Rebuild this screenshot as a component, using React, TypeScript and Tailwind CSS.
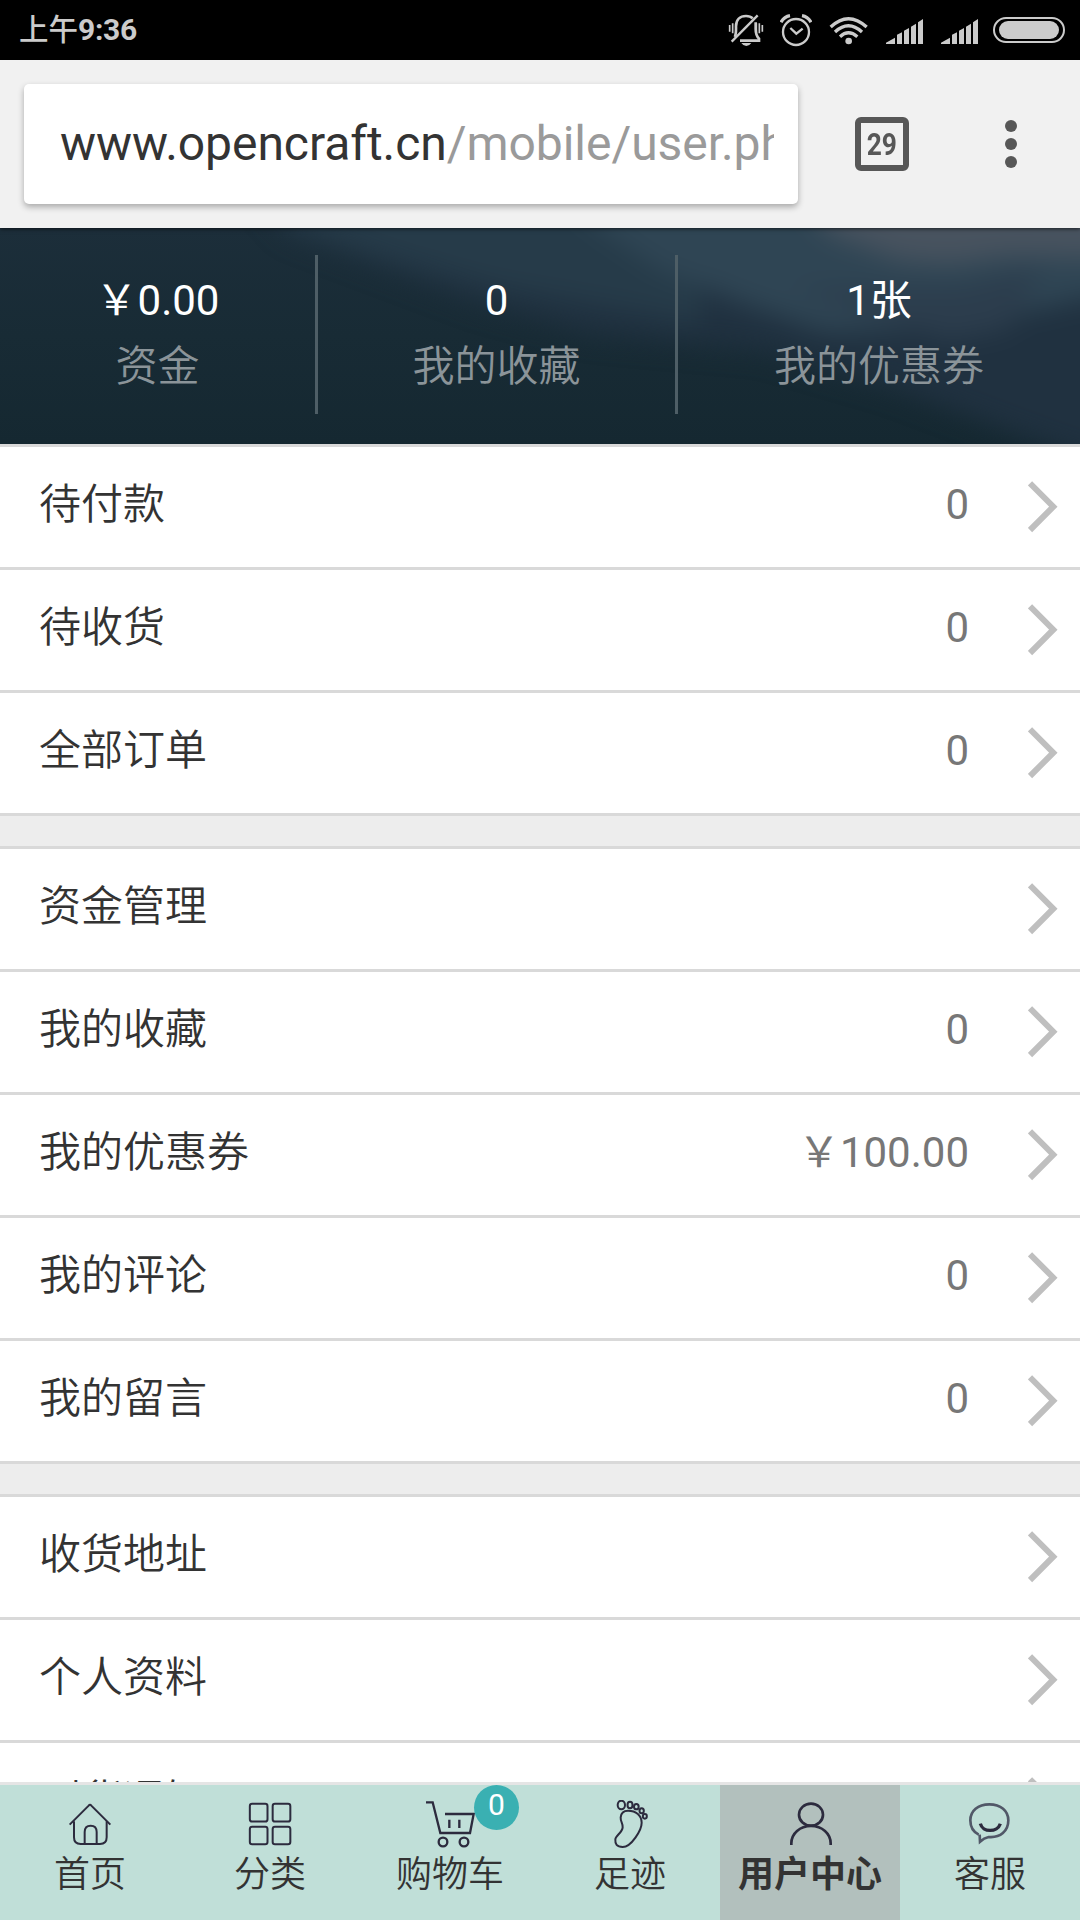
import type { ReactNode } from 'react'

type Row = {
  label: string
  value?: string
}

type NavItem = {
  label: string
  icon: ReactNode
  active?: boolean
  badge?: number
}

const stats = [
  { label: '资金', value: '￥0.00', width: 'w-[318px]' },
  { label: '我的收藏', value: '0', width: 'w-[360px]' },
  { label: '我的优惠券', value: '1张', width: 'w-[402px]' },
]

const groups: Row[][] = [
  [
    { label: '待付款', value: '0' },
    { label: '待收货', value: '0' },
    { label: '全部订单', value: '0' },
  ],
  [
    { label: '资金管理' },
    { label: '我的收藏', value: '0' },
    { label: '我的优惠券', value: '￥100.00' },
    { label: '我的评论', value: '0' },
    { label: '我的留言', value: '0' },
  ],
  [{ label: '收货地址' }, { label: '个人资料' }, { label: '到货通知' }],
]

function SignalIcon() {
  return (
    <svg className="h-[34px] w-[37px]" viewBox="0 0 111 102" fill="#cbcbcb">
      <path d="M0 93V89L27 74V93ZM33 93V65L48 58V93ZM54 93V53L69 45V93ZM75 93V41L90 32V93ZM96 93V28L111 18V93Z" />
    </svg>
  )
}

function StatusBar() {
  return (
    <div className="flex h-[60px] shrink-0 items-center bg-black pr-[15px] pl-[19px] text-[#cbcbcb]">
      <span className="flex-1 text-[30px] leading-[62px] font-bold">
        <span className="text-[29.5px] font-medium">上午</span>
        <span className="tracking-[-0.3px]">9:36</span>
      </span>
      <svg className="mr-4 h-[34px] w-9" viewBox="0 0 108 102" fill="none" stroke="#cbcbcb">
        <path d="M20 72C25 64 24 56 24 40C24 20 36 9 54 9C62 9 69 11 74 16M83 28V48C83 64 86 70 93 77V83H36" strokeWidth="8" />
        <path d="M11 86L89 7" strokeWidth="7" />
        <path d="M5 36V56M14 31V61M94 31V61M103 36V56M85 31V61" strokeWidth="5" />
        <path d="M40 90H70Q64 99 55 99T40 90Z" fill="#cbcbcb" stroke="none" />
      </svg>
      <svg className="mr-[17px] h-[34px] w-8" viewBox="0 0 96 102" fill="none" stroke="#cbcbcb">
        <circle cx="48" cy="57" r="39" strokeWidth="7" />
        <path d="M31 45L49 62L68 47" strokeWidth="7" />
        <path d="M3 28Q12 11 30 8M93 28Q84 11 66 8" strokeWidth="10" />
      </svg>
      <svg className="mr-[18px] h-[34px] w-[39px]" viewBox="0 0 117 102" fill="none" stroke="#cbcbcb">
        <path d="M5 42Q58 -8 113 42M18 57Q58 20 99 57M33 71Q58 48 85 71" strokeWidth="10" />
        <circle cx="59" cy="84" r="10" fill="#cbcbcb" stroke="none" />
      </svg>
      <div className="mr-[15px] flex gap-[18px]">
        <SignalIcon />
        <SignalIcon />
      </div>
      <div className="h-[26px] w-[72px] rounded-full border-2 border-[#cbcbcb] p-[2px]">
        <div className="mx-[2px] h-full rounded-full bg-[#cbcbcb]" />
      </div>
    </div>
  )
}

function BrowserBar() {
  return (
    <div className="relative z-10 flex h-[168px] shrink-0 items-center bg-[#f1f1f1] pl-6 shadow-[0_1px_4px_rgba(0,0,0,0.6)]">
      <div className="h-[120px] w-[774px] rounded-[5px] bg-white pr-6 pl-9 shadow-[0_3px_6px_rgba(0,0,0,0.3)]">
        <div className="overflow-hidden text-[48px] leading-[120px] tracking-[-0.05px] whitespace-nowrap text-[#333]">
          www.opencraft.cn<span className="text-[#9a9a9a]">/mobile/user.php</span>
        </div>
      </div>
      <div className="ml-[57px] flex size-[54px] items-center justify-center rounded-md border-[6px] border-[#575757]">
        <span className="scale-x-85 text-[31px] leading-none font-bold text-[#575757]">29</span>
      </div>
      <div className="ml-24 flex flex-col gap-[6px]">
        <i className="size-3 rounded-full bg-[#575757]" />
        <i className="size-3 rounded-full bg-[#575757]" />
        <i className="size-3 rounded-full bg-[#575757]" />
      </div>
    </div>
  )
}

function Stats() {
  return (
    <div className="relative flex h-[216px] shrink-0 overflow-hidden bg-[#182a35] pt-[27px]">
      <svg className="absolute inset-0 size-full" viewBox="0 0 1080 216" preserveAspectRatio="none">
        <defs>
          <linearGradient id="base" x1="0" y1="0" x2="0" y2="1">
            <stop offset="0" stopColor="#1c2e3a" />
            <stop offset="0.5" stopColor="#182b35" />
            <stop offset="1" stopColor="#152831" />
          </linearGradient>
          <filter id="soft" x="-20%" y="-50%" width="140%" height="200%" colorInterpolationFilters="sRGB">
            <feGaussianBlur stdDeviation="13" />
          </filter>
        </defs>
        <rect width="1080" height="216" fill="url(#base)" />
        <g filter="url(#soft)">
          <path d="M250 -40L290 4L386 40L482 76L592 106L764 122L895 160L1033 212L1140 250V-40Z" fill="#203140" />
          <path d="M260 -40L290 0L386 30L500 60L640 84L700 96L700 -40Z" fill="#263b49" />
          <path d="M550 -40L598 0L660 42L744 76L826 104L964 100L1060 76L1140 60V-40Z" fill="#2f4554" />
          <path d="M790 60L880 90L950 112L1010 100L1040 40L960 60Z" fill="#2c3d4d" />
          <path d="M790 -40L830 6L900 32L950 36L1010 28L1100 30L1140 10V-40Z" fill="#48535f" />
        </g>
      </svg>
      {stats.map((s, i) => (
        <div
          key={s.label}
          className={`relative h-[159px] text-center text-[42px] ${s.width} ${
            i < stats.length - 1 ? 'border-r-[3px] border-[#4e5e66]' : ''
          }`}
        >
          <p className="pt-[13px] leading-[66px] text-white">{s.value}</p>
          <p className="leading-[66px] font-[350] text-[#8b9499]">{s.label}</p>
        </div>
      ))}
    </div>
  )
}

function MenuRow({ label, value }: Row) {
  return (
    <li className="flex h-[123px] items-center border-b-[3px] border-[#d9d9d9] bg-white pr-[22px] pl-[39px] text-[42px] font-[350]">
      <span className="flex-1 pb-1 leading-[60px] text-[#333]">{label}</span>
      {value && <span className="mr-[59px] pb-1 leading-[60px] font-normal text-[#777]">{value}</span>}
      <svg className="h-[52px] w-[30px]" viewBox="0 0 30 52" fill="none" stroke="#bfbfbf" strokeWidth="6">
        <path d="M2 2.3L25.3 25.7L2 49.1" />
      </svg>
    </li>
  )
}

function NavIcon({ width = 6, children }: { width?: number; children: ReactNode }) {
  return (
    <svg className="h-12 w-[60px]" viewBox="0 0 180 144" fill="none" stroke="#2c2b3e" strokeWidth={width}>
      {children}
    </svg>
  )
}

const navItems: NavItem[] = [
  {
    label: '首页',
    icon: (
      <NavIcon>
        <path d="M29 74L86 17Q90 12 94 17L151 74" />
        <path d="M42 64V112Q42 132 62 132H120Q140 132 140 112V64" />
        <path d="M74 132V96Q74 77 92 77T110 96V132" />
      </NavIcon>
    ),
  },
  {
    label: '分类',
    icon: (
      <NavIcon>
        <rect x="29.5" y="11.5" width="53" height="53" rx="7" />
        <rect x="98" y="11.5" width="53" height="53" rx="7" />
        <rect x="29.5" y="80" width="53" height="53" rx="7" />
        <rect x="98" y="80" width="53" height="53" rx="7" />
      </NavIcon>
    ),
  },
  {
    label: '购物车',
    badge: 0,
    icon: (
      <NavIcon width={7}>
        <path d="M18 7H38L61 99H150L161 42H75M88 59V84M118 59V84" />
        <circle cx="69" cy="126" r="13" />
        <circle cx="132" cy="126" r="13" />
      </NavIcon>
    ),
  },
  {
    label: '足迹',
    icon: (
      <NavIcon>
        <ellipse cx="64" cy="15" rx="11" ry="13" />
        <ellipse cx="90" cy="15" rx="7.5" ry="10" />
        <ellipse cx="109" cy="20" rx="7" ry="8" />
        <ellipse cx="125" cy="32" rx="6.5" ry="7.5" />
        <ellipse cx="134.5" cy="49" rx="6" ry="7" />
        <path d="M84 32C108 32 125 46 125 68C125 90 94 141 68 141C50 141 45 132 46 118C47 106 67 98 68 82C69 70 61 64 62 52C63 40 71 32 84 32Z" />
      </NavIcon>
    ),
  },
  {
    label: '用户中心',
    active: true,
    icon: (
      <NavIcon width={8}>
        <ellipse cx="93" cy="44" rx="36" ry="33" />
        <path d="M34 135V130C34 100 60 78 93 78S152 100 152 130V135" />
      </NavIcon>
    ),
  },
  {
    label: '客服',
    icon: (
      <NavIcon>
        <path
          d="M56 104C40 96 31 81 31 61C31 32 54 13 88 13S145 32 145 61C145 93 121 114 86 111Q72 114 60 125L59 104"
          stroke="#515868"
          strokeWidth="8"
        />
        <path d="M61 71C68 98 112 98 121 71" strokeWidth="10" />
      </NavIcon>
    ),
  },
]

function BottomNav() {
  return (
    <nav className="flex h-[138px] shrink-0 border-t-[3px] border-[#e5e5e5] bg-[#c0dfd8]">
      {navItems.map((item) => (
        <div
          key={item.label}
          className={`relative flex w-[180px] flex-col items-center pt-[15px] text-[36px] leading-[54px] text-[#333] ${
            item.active ? 'bg-[#b2c0bd] font-bold' : 'font-[350]'
          }`}
        >
          {item.icon}
          <span>{item.label}</span>
          {item.badge !== undefined && (
            <span className="absolute top-0 left-[114px] size-[45px] rounded-full bg-[#3ab0b2] text-center text-[30px] leading-[39px] font-normal text-white">
              {item.badge}
            </span>
          )}
        </div>
      ))}
    </nav>
  )
}

export default function App() {
  return (
    <div
      lang="zh-CN"
      className="flex h-[1920px] w-[1080px] flex-col overflow-hidden bg-[#ededed] font-[Roboto,'Noto_Sans_CJK_SC',sans-serif]"
    >
      <StatusBar />
      <BrowserBar />
      <Stats />
      <main className="flex min-h-0 flex-1 flex-col gap-[30px] overflow-hidden">
        {groups.map((rows) => (
          <ul key={rows[0].label} className="shrink-0 border-t-[3px] border-[#d9d9d9]">
            {rows.map((row) => (
              <MenuRow key={row.label} {...row} />
            ))}
          </ul>
        ))}
      </main>
      <BottomNav />
    </div>
  )
}
